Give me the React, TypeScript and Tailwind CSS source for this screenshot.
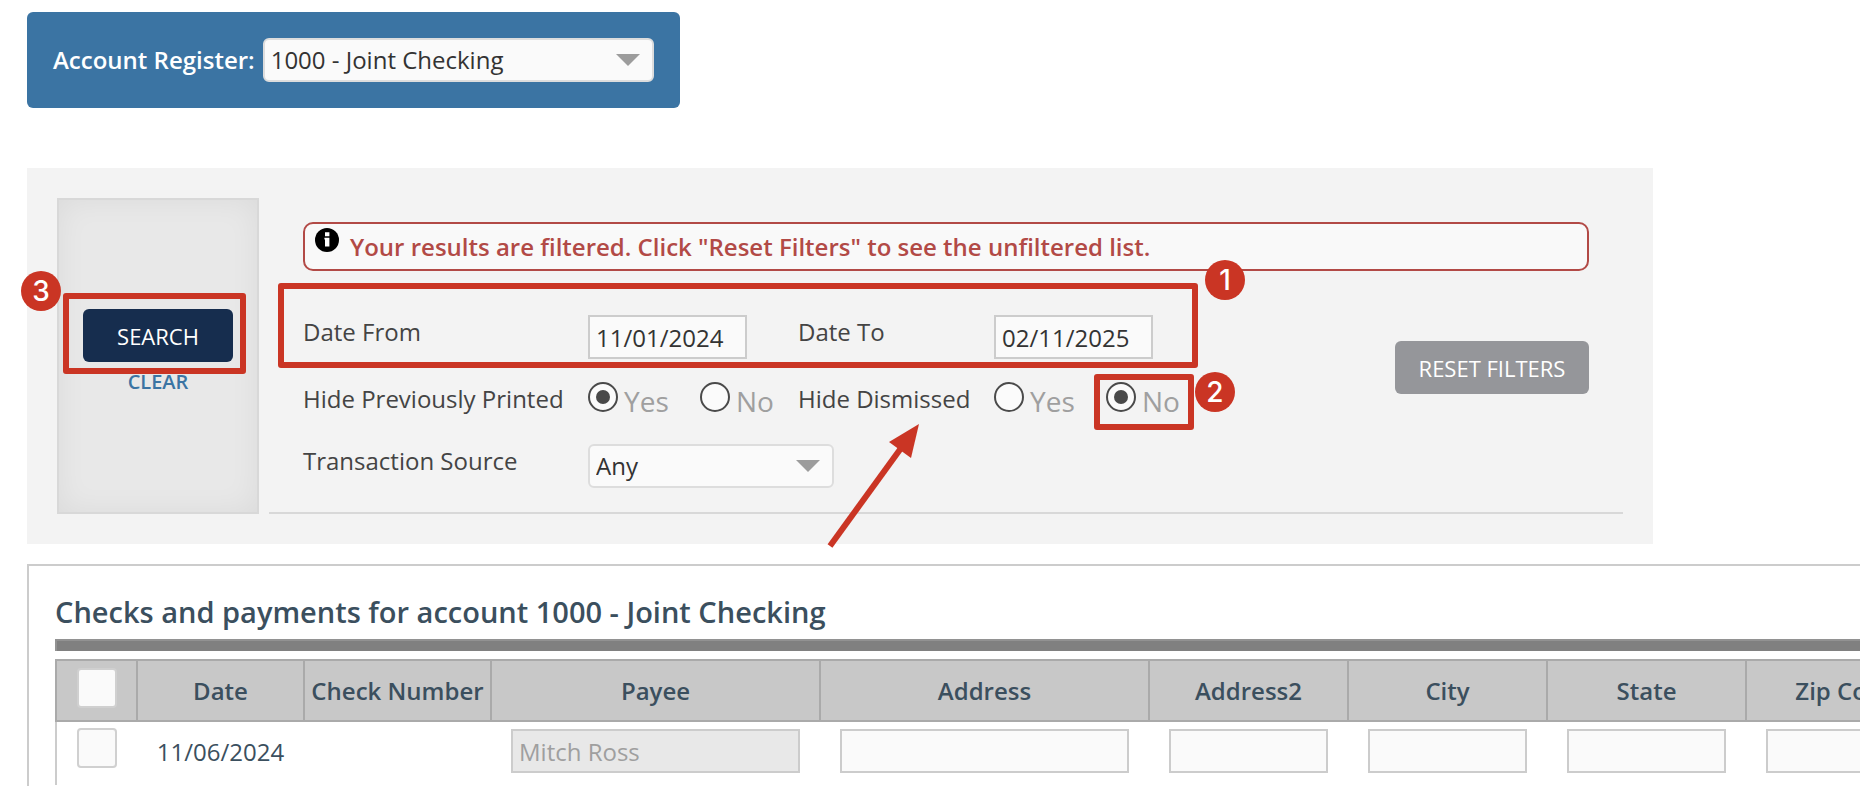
import { useState, type ReactNode } from "react";

const columns = [
  { name: "Date", width: "w-[167px]" },
  { name: "Check Number", width: "w-[187px]" },
  { name: "Payee", width: "w-[329px]" },
  { name: "Address", width: "w-[329px]" },
  { name: "Address2", width: "w-[199px]" },
  { name: "City", width: "w-[199px]" },
  { name: "State", width: "w-[199px]" },
  { name: "Zip Code", width: "w-[199px]" },
];

const editable = ["Address", "Address2", "City", "State", "Zip Code"];

const headCell = "border-2 border-[#aaaaaa] p-0";
const checkbox =
  "block size-10 appearance-none rounded border-2 border-[#d0d0d0] bg-[#fafafa] checked:bg-[#3b74a3]";

function SelectBox({ id, options, className }: { id: string; options: string[]; className: string }) {
  return (
    <div className={`relative ${className}`}>
      <select
        id={id}
        className="h-11 w-full appearance-none rounded-md border-2 border-[#dddddd] bg-[#fafafa] pr-10 pl-1.5 text-[#333333]"
      >
        {options.map((option) => (
          <option key={option}>{option}</option>
        ))}
      </select>
      <svg viewBox="0 0 24 12" className="pointer-events-none absolute top-4 right-3.5 h-3 w-6" aria-hidden="true">
        <path d="M0 0h24L12 12z" fill="#9c9c9c" />
      </svg>
    </div>
  );
}

function RadioPair({ name, label, initial }: { name: string; label: string; initial: string }) {
  const [value, setValue] = useState(initial);
  return (
    <div role="radiogroup" aria-label={label} className="flex">
      {["Yes", "No"].map((option) => (
        <label key={option} className="flex w-28 shrink-0 items-start gap-1.5 text-[28px] leading-[38px] text-[#9f9f9f]">
          <input
            type="radio"
            name={name}
            checked={value === option}
            onChange={() => setValue(option)}
            className="grid size-[30px] shrink-0 appearance-none place-items-center rounded-full border-2 border-[#4a4a4a] bg-[#fbfbfb] before:size-3.5 before:rounded-full checked:before:bg-[#4a4a4a]"
          />
          {option}
        </label>
      ))}
    </div>
  );
}

function Marker({ className, children }: { className: string; children: ReactNode }) {
  return (
    <span
      className={`absolute flex size-10 items-center justify-center rounded-full bg-[#ca3524] font-[Inter,sans-serif] text-[28px] leading-10 font-medium text-white ${className}`}
    >
      {children}
    </span>
  );
}

function Outline({ className }: { className: string }) {
  return <span className={`pointer-events-none absolute rounded-[3px] border-6 border-[#ca3524] ${className}`} />;
}

export default function App() {
  return (
    <main className="flex min-h-screen flex-col overflow-hidden bg-white pt-3 pl-[27px] font-['Open_Sans',sans-serif] text-2xl leading-8 text-[#444444]">
      <section className="flex h-24 items-center gap-2 self-start rounded-md bg-[#3b74a3] px-[26px]">
        <label htmlFor="account" className="font-semibold whitespace-nowrap text-white">
          Account Register:
        </label>
        <SelectBox id="account" options={["1000 - Joint Checking"]} className="w-[391px]" />
      </section>

      <section className="relative mt-[60px] flex w-full max-w-[1626px] gap-2.5 bg-[#f3f3f3] p-[30px]">
        <div className="relative flex w-[202px] shrink-0 flex-col items-center gap-1.5 border-2 border-[#d8d8d8] bg-[#e8e8e8] pt-[109px] shadow-[inset_0_0_30px_rgba(0,0,0,0.06)]">
          <button type="button" className="h-[53px] w-[150px] rounded-md bg-[#162d4e] text-[22px] text-white">
            SEARCH
          </button>
          <a href="#clear" className="text-xl leading-7 font-semibold text-[#3b74a3]">
            CLEAR
          </a>
          <Outline className="top-[93px] left-1 h-[81px] w-[183px]" />
          <Marker className="top-[71px] -left-[38px]">3</Marker>
        </div>

        <div className="flex h-[316px] flex-1 flex-col border-b-2 border-[#d8d8d8] px-[34px] pt-6">
          <p
            role="status"
            className="flex h-[49px] items-center gap-[11px] rounded-[10px] border-2 border-[#b24a46] bg-[#f9f9f9] pl-2.5 font-semibold text-[#b24a46]"
          >
            <svg viewBox="0 0 24 24" className="mb-3.5 size-6 shrink-0" aria-hidden="true">
              <circle cx="12" cy="12" r="12" fill="#000" />
              <path d="M10 4.2h4.4v4H10zM9.4 9.8h5v8.6H10v-7h-.6z" fill="#fff" />
            </svg>
            Your results are filtered. Click "Reset Filters" to see the unfiltered list.
          </p>

          <div className="mt-11 flex items-start justify-between">
            <div className="relative grid grid-cols-[285px_210px_196px_auto] grid-rows-[67px_62px_44px] items-start leading-[34px]">
              <label htmlFor="from">Date From</label>
              <input
                id="from"
                defaultValue="11/01/2024"
                className="h-11 w-[159px] border-2 border-[#cccccc] bg-[#fafafa] px-1.5 text-[#333333]"
              />
              <label htmlFor="to">Date To</label>
              <input
                id="to"
                defaultValue="02/11/2025"
                className="h-11 w-[159px] border-2 border-[#cccccc] bg-[#fafafa] px-1.5 text-[#333333]"
              />
              <span>Hide Previously Printed</span>
              <RadioPair name="printed" label="Hide Previously Printed" initial="Yes" />
              <span>Hide Dismissed</span>
              <RadioPair name="dismissed" label="Hide Dismissed" initial="No" />
              <label htmlFor="source">Transaction Source</label>
              <SelectBox id="source" options={["Any"]} className="w-[246px]" />

              <Outline className="-top-8 -left-[25px] h-[85px] w-[920px]" />
              <Outline className="top-[59px] left-[791px] h-14 w-[100px]" />
              <Marker className="-top-[55px] left-[902px]">1</Marker>
              <Marker className="top-[57px] left-[892px]">2</Marker>
              <svg
                viewBox="0 0 96 128"
                className="pointer-events-none absolute top-[107px] left-[524px] h-32 w-24"
                aria-hidden="true"
              >
                <path d="M3 124 77 22" stroke="#ca3524" strokeWidth="6" fill="none" />
                <path d="M92 2 62 20 84 36z" fill="#ca3524" />
              </svg>
            </div>
            <button type="button" className="mt-[26px] h-[53px] w-[194px] rounded-md bg-[#95969a] text-[22px] text-white">
              RESET FILTERS
            </button>
          </div>
        </div>
      </section>

      <section className="mt-5 flex-1 overflow-hidden border-t-2 border-l-2 border-[#cccccc] pt-7 pl-[26px]">
        <h1 className="text-[29px] leading-9 font-semibold text-[#3b4f5e]">
          Checks and payments for account 1000 - Joint Checking
        </h1>
        <div className="mt-[9px] h-3 border-t-2 border-l-2 border-[#929292] bg-[#808080]" />
        <table className="mt-2 w-[1890px] table-fixed border-collapse text-[#3b4f5e]">
          <thead>
            <tr className="h-[61px] bg-[#c8c8c8]">
              <th className={`${headCell} w-[81px] align-top`}>
                <input type="checkbox" aria-label="Select all" className={`${checkbox} mx-auto mt-[7px]`} />
              </th>
              {columns.map((column) => (
                <th key={column.name} className={`${headCell} ${column.width} font-semibold whitespace-nowrap`}>
                  {column.name}
                </th>
              ))}
            </tr>
          </thead>
          <tbody>
            <tr className="h-16 border-l-2 border-[#cccccc] align-top">
              <td className="p-0 pt-1.5">
                <input type="checkbox" aria-label="Select payment to Mitch Ross" className={`${checkbox} mx-auto`} />
              </td>
              <td className="p-0 pt-3.5 text-center">11/06/2024</td>
              <td />
              <td className="px-5 pt-[7px]">
                <input
                  aria-label="Payee"
                  defaultValue="Mitch Ross"
                  disabled
                  className="block h-11 w-full border-2 border-[#cccccc] bg-[#e8e8e8] px-1.5 text-[#9f9f9f]"
                />
              </td>
              {editable.map((name) => (
                <td key={name} className="px-5 pt-[7px]">
                  <input aria-label={name} className="block h-11 w-full border-2 border-[#cccccc] bg-[#fafafa] px-1.5" />
                </td>
              ))}
            </tr>
          </tbody>
        </table>
      </section>
    </main>
  );
}
